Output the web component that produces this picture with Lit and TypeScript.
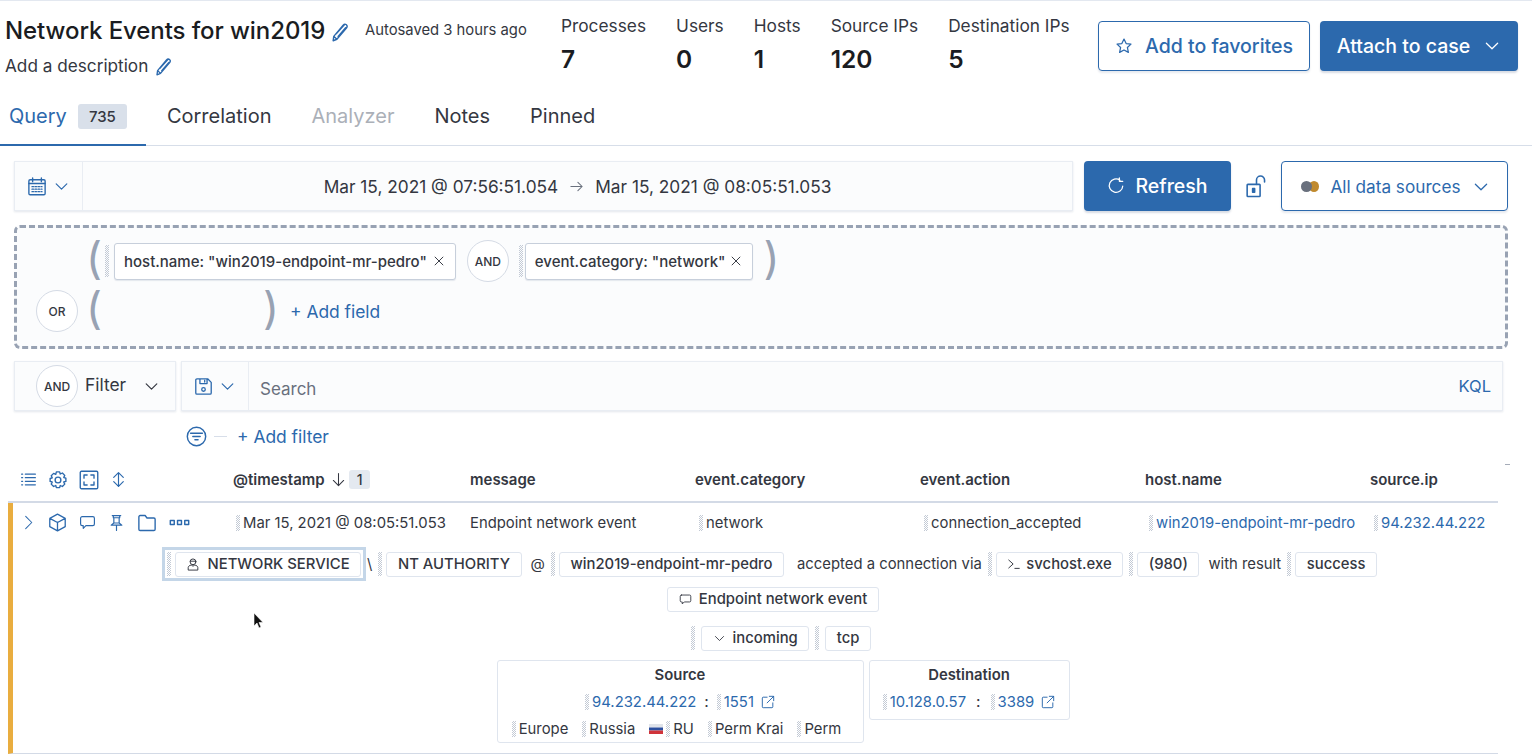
import { LitElement, html, css, svg } from 'lit';
import { customElement } from 'lit/decorators.js';

const icon = (size: number, body: unknown, cls = '') => html`<svg class="ic ${cls}" width=${size} height=${size} viewBox="0 0 16 16" fill="none" stroke="currentColor" stroke-width="1.1" stroke-linecap="round" stroke-linejoin="round">${body}</svg>`;

const chevron = svg`<path d="M3 5.500l5 5 5-5"/>`;
const pencil = svg`<path d="M3 11.500L10.500 2.500c.8-.9 1.800-1 2.600-.3s.8 1.700.1 2.600L5.500 13.800 2.500 15zM3.200 11.600l2.300 2.200M5 9.500l6.500-7.200M6.500 11.500l6-7"/>`;
const star = svg`<path d="M8 1.800l1.900 4 4.300.5-3.200 3 .9 4.400L8 11.500l-3.900 2.200.9-4.400-3.200-3 4.300-.5z"/>`;
const calendar = svg`<rect x="1.500" y="3" width="13" height="12" rx="1"/><path d="M1.500 6h13M4.500 1.500v3M11.500 1.500v3"/><path d="M4 8.500h8M4 10.500h8M4 12.500h8" stroke-dasharray="1.200 1.200"/>`;
const refresh = svg`<path d="M11.500 2.800A6 6 0 1 0 14 8M11 .8v3h3"/>`;
const lock = svg`<rect x="1.500" y="6.500" width="9" height="8.500" rx=".5"/><path d="M8 6.500V3.500a2.800 2.800 0 0 1 5.600 0v1.300"/><rect x="5.300" y="9.500" width="1.400" height="2.500" fill="currentColor"/>`;
const close = svg`<path d="M3.500 3.500l9 9M12.500 3.500l-9 9"/>`;
const save = svg`<path d="M2.500 1.500h9l3 3v9a1 1 0 0 1-1 1h-11a1 1 0 0 1-1-1v-11a1 1 0 0 1 1-1zM5 1.500v4h6v-4M9 2.800v1.400"/><circle cx="8" cy="10.500" r="1.500"/>`;
const filter = svg`<circle cx="8" cy="8" r="7"/><path d="M3.500 5.500h9M5.200 8h5.600M6.800 10.500h2.400"/>`;
const list = svg`<path d="M5 3h9.500M5 6.300h9.500M5 9.700h9.500M5 13h9.500M1.500 3h1M1.500 6.300h1M1.500 9.700h1M1.500 13h1"/>`;
const gear = svg`<circle cx="8" cy="8" r="2.300"/><path d="M6.700 1.500h2.600l.5 1.700 1.700-.8 1.900 1.900-.8 1.700 1.700.5v2.600l-1.700.5.8 1.700-1.900 1.900-1.700-.8-.5 1.700H6.700l-.5-1.700-1.700.8-1.900-1.900.8-1.700-1.700-.5V6.800l1.700-.5-.8-1.700 1.900-1.900 1.700.8z"/>`;
const full = svg`<rect x="1" y="1" width="14" height="14" rx="1"/><path d="M4 6.500V4h2.500M9.500 4H12v2.500M12 9.500V12H9.500M6.500 12H4V9.500"/>`;
const updown = svg`<path d="M8 1.500v13M3.500 6L8 1.500 12.500 6M3.500 10L8 14.500 12.500 10"/>`;
const arrowDown = svg`<path d="M8 1.500v13M2.500 9L8 14.500 13.500 9"/>`;
const arrowRight = svg`<path d="M2 8h12M9.500 3.500L14 8l-4.500 4.500"/>`;
const expand = svg`<path d="M5 1.500L11.500 8 5 14.500"/>`;
const cube = svg`<path d="M8 1l6.500 3.500v7L8 15l-6.500-3.500v-7zM1.500 4.500L8 8l6.500-3.500M8 8v7"/>`;
const comment = svg`<path d="M3 2.500h10a1.500 1.500 0 0 1 1.500 1.500v5.500A1.500 1.500 0 0 1 13 11H6.500L4 13.500V11H3A1.500 1.500 0 0 1 1.500 9.500V4A1.500 1.500 0 0 1 3 2.500z"/>`;
const pin = svg`<path d="M4 1.500h8M5 1.500v2h6v-2M5.500 3.500v5h5v-5M3 10.500L5.500 8.500h5l2.500 2zM8 10.500V15.500"/>`;
const folder = svg`<path d="M1.500 3a1 1 0 0 1 1-1h4l1.500 2h5.500a1 1 0 0 1 1 1v8a1 1 0 0 1-1 1h-11a1 1 0 0 1-1-1z"/>`;
const more = svg`<rect x="1" y="6.500" width="3" height="3"/><rect x="6.500" y="6.500" width="3" height="3"/><rect x="12" y="6.500" width="3" height="3"/>`;
const user = svg`<circle cx="8" cy="5.500" r="3.300"/><path d="M4.800 4.800h6.400M2.500 14.500v-2.500c0-1.300 1.500-2.500 3.500-2.800L8 10.500l2-1.300c2 .3 3.500 1.500 3.500 2.800v2.500z"/>`;
const terminal = svg`<path d="M2 3.500L7 8l-5 4.500M9 13h5"/>`;
const external = svg`<path d="M7 2.500H2.500a1 1 0 0 0-1 1v10a1 1 0 0 0 1 1h10a1 1 0 0 0 1-1V9M9.500 1.500h5v5M14.500 1.500L7 9"/>`;

@customElement('app-root')
export class AppRoot extends LitElement {
  static styles = css`
    :host {
      display: block;
      position: relative;
      height: 756px;
      overflow: hidden;
      background: #fff;
      color: #343741;
      font-family: Inter, 'Liberation Sans', sans-serif;
      font-size: 17.300px;
      border-top: 1px solid #e3e8f0;
      box-sizing: border-box;
    }
    .ic { flex: none; display: block; }
    .blue { color: #2c69ad; }

    .head { display: flex; height: 94px; box-sizing: border-box; padding-left: 5px; }
    .title-box { width: 360px; padding-top: 13px; flex: none; }
    .title { display: flex; align-items: center; gap: 5px; font-size: 24px; line-height: 34px; color: #1a1c21; font-weight: 500; letter-spacing: -0.08px; white-space: nowrap; }
    .title .ic { margin-top: 1px; }
    .desc { display: flex; align-items: center; gap: 6px; margin-top: 5px; line-height: 26px; font-size: 17.200px; }
    .saved { flex: none; width: 196px; padding-top: 19px; line-height: 20px; font-size: 14.800px; white-space: nowrap; }
    .stats { display: flex; gap: 30px; padding-top: 14px; flex: none; width: 537px; box-sizing: border-box; }
    .stat-l { line-height: 22px; font-size: 17.300px; white-space: nowrap; }
    .stat-v { margin-top: 7px; line-height: 30px; font-size: 24.500px; font-weight: 600; color: #1a1c21; }
    .btns { display: flex; gap: 10px; padding-top: 20px; }
    .btn { display: flex; align-items: center; justify-content: center; height: 50px; box-sizing: border-box; border-radius: 4px; font-size: 19.500px; font-weight: 500; white-space: nowrap; }
    .btn.outline { border: 1px solid #2c69ad; color: #2c69ad; background: #fff; box-shadow: 0 2px 2px rgba(60, 80, 120, 0.12); }
    .btn.solid { background: #2c69ad; color: #fff; box-shadow: 0 2px 2px rgba(60, 80, 120, 0.2); }
    .fav { width: 212px; gap: 12px; }
    .attach { width: 198px; gap: 13px; }

    .tabs { display: flex; height: 51px; border-bottom: 1px solid #d7dee9; box-sizing: border-box; font-size: 20px; }
    .tab { display: flex; align-items: center; gap: 11px; padding: 0 0 8px; white-space: nowrap; }
    .tab.on { color: #2c69ad; padding: 0 19px 8px 9px; border-bottom: 2px solid #2c69ad; height: 51px; box-sizing: border-box; margin-right: 21px; }
    .tab + .tab { margin-right: 40px; }
    .tab.off { color: #abb0b8; }
    .badge { display: block; width: 49px; line-height: 25px; text-align: center; background: #d9e0ea; border-radius: 3px; font-size: 15px; color: #343741; font-weight: 500; margin-top: 2px; }

    .date-row { display: flex; align-items: stretch; height: 50px; margin: 15px 24px 0 14px; }
    .panel { background: #fbfcfd; border: 1px solid #e9edf3; box-shadow: 0 1px 2px rgba(60, 80, 120, 0.14); box-sizing: border-box; }
    .date { flex: none; width: 1059px; display: flex; }
    .date-pick { width: 68px; flex: none; display: flex; align-items: center; gap: 6px; padding-left: 12px; box-sizing: border-box; border-right: 1px solid #e9edf3; color: #2c69ad; }
    .date-val { flex: 1; display: flex; align-items: center; justify-content: center; gap: 11px; white-space: nowrap; }
    .date-val .ic { color: #69707d; }
    .refresh { width: 147px; margin-left: 11px; gap: 10px; }
    .lock { width: 50px; display: flex; align-items: center; justify-content: center; color: #2c69ad; flex: none; }
    .sources { width: 227px; flex: none; gap: 11px; font-size: 17.200px; font-weight: 400; padding: 1px 0 0 2px; }
    .dots { display: flex; width: 18px; }
    .dots i { display: block; width: 11px; height: 11px; border-radius: 50%; background: #69707d; position: relative; z-index: 1; flex: none; }
    .dots i + i { background: #c08a2e; margin-left: -3px; z-index: 0; width: 10px; }

    .drop { height: 124px; margin: 14px 24px 0 14px; box-sizing: border-box; border: 3px dashed #98a2b3; border-radius: 6px; background: #fbfcfd; padding: 0 0 0 19px; font-size: 15px; }
    .drop-line { display: flex; align-items: center; height: 50px; }
    .drop-line.first { margin-top: 8px; padding-left: 50px; }
    .paren { font-size: 44px; line-height: 44px; color: #98a2b3; font-weight: 400; width: 12px; flex: none; margin-top: -6px; }
    .circle { width: 42px; height: 42px; border-radius: 50%; border: 1px solid #d5dbe5; background: #fff; display: flex; align-items: center; justify-content: center; font-size: 12px; font-weight: 500; color: #343741; box-sizing: border-box; flex: none; }
    .grip { display: block; width: 4px; height: 24px; flex: none; background: repeating-conic-gradient(#c3cad5 0 25%, transparent 0 50%) 0 0 / 2px 2px; }
    .grip.tall { height: 32px; }
    .grip.short { height: 16px; }
    .pill { display: flex; align-items: center; gap: 5px; height: 37px; box-sizing: border-box; padding: 0 9px; background: #fff; border: 1px solid #c7cfdb; border-radius: 3px; white-space: nowrap; font-weight: 500; box-shadow: 0 1px 1px rgba(60, 80, 120, 0.12); }
    .add { color: #2c69ad; white-space: nowrap; font-size: 17.400px; }

    .filter-row { display: flex; height: 50px; margin: 12px 29px 0 14px; gap: 5px; }
    .fbox { width: 162px; flex: none; display: flex; align-items: center; padding-left: 21px; gap: 7px; font-size: 17.400px; }
    .fbox .ic { margin-left: 10px; }
    .ftxt { margin-top: -3px; }
    .search { flex: 1; display: flex; align-items: center; }
    .save { width: 67px; flex: none; height: 100%; display: flex; align-items: center; gap: 6px; padding-left: 12px; box-sizing: border-box; border-right: 1px solid #e9edf3; color: #2c69ad; }
    .search-t { flex: 1; padding-left: 11px; color: #69707d; font-size: 17px; padding-top: 5px; }
    .kql { color: #2c69ad; padding-right: 11px; font-size: 16.500px; }

    .add-filter { display: flex; align-items: center; height: 34px; margin: 8px 0 0 186px; color: #2c69ad; gap: 10px; font-size: 17.400px; }
    .add-filter i { display: block; width: 13px; height: 1px; background: #d7dee9; margin-left: -3px; }

    .table { margin: 3px 34px 0 8px; font-size: 14.850px; }
    .grid { display: grid; grid-template-columns: 225px 237px repeat(5, 225px); }
    .thead { height: 47px; padding-top: 2px; align-items: center; border-bottom: 2px solid #d3dae6; box-sizing: border-box; font-weight: 600; color: #343741; white-space: nowrap; font-size: 15px; }
    .tools { display: flex; align-items: center; gap: 11px; color: #2c69ad; padding-left: 12px; }
    .th { display: flex; align-items: center; gap: 6px; }
    .count { background: #e4e9f0; border-radius: 3px; padding: 0 8px; line-height: 19px; font-size: 14px; font-weight: 500; margin-left: -3px; }
    .row { border-left: 5px solid #e9ad3f; height: 251px; box-sizing: border-box; border-bottom: 1px solid #d3dae6; }
    .row-top { display: grid; grid-template-columns: 220px 237px repeat(5, 225px); height: 44px; align-items: center; padding-bottom: 5px; box-sizing: border-box; white-space: nowrap; }
    .row-tools { display: flex; align-items: center; gap: 12px; color: #2c69ad; padding-left: 8px; }
    .cell { display: flex; align-items: center; gap: 3px; padding-left: 4px; }
    .cell.lead { padding-left: 3px; }
    .lnk { color: #2c69ad; }
    .line { display: flex; justify-content: center; align-items: center; gap: 6px; white-space: nowrap; }
    .line.l1 { height: 34px; padding-left: 28px; }
    .line.l2 { height: 24px; margin-top: 6px; padding-left: 35px; }
    .line.l3 { height: 24px; margin-top: 15px; padding-left: 51px; }
    .tag { display: flex; align-items: center; gap: 7px; height: 25px; box-sizing: border-box; padding: 0 10.500px; background: #fff; border: 1px solid #dfe5ee; border-radius: 3px; font-weight: 500; }
    .tag.tight { gap: 5px; }
    .sel { display: flex; align-items: center; gap: 4px; padding: 2px; height: 34px; box-sizing: border-box; border: 3px solid #c4d6e8; }
    .g { margin-right: -2px; }
    .boxes { display: flex; justify-content: center; gap: 5px; margin-top: 10px; padding-left: 55px; align-items: flex-start; }
    .box { border: 1px solid #dfe5ee; border-radius: 3px; box-sizing: border-box; background: #fff; }
    .box h4 { margin: 0; text-align: center; font-size: 14.850px; line-height: 20px; padding-top: 4px; font-weight: 600; color: #343741; }
    .src { width: 367px; height: 83px; }
    .dst { width: 201px; height: 60px; }
    .ips { display: flex; justify-content: center; align-items: center; gap: 3px; height: 28px; margin-top: 3px; }
    .ips b { font-weight: 500; margin: 0 5px; color: #343741; }
    .dst .ips b { margin: 0 7px; }
    .ips .ic { margin-left: 4px; }
    .geo { display: flex; justify-content: center; align-items: center; gap: 3px; height: 28px; margin-top: -1px; padding-right: 7px; }
    .geo span { margin-right: 11px; }
    .geo span:last-child { margin-right: 0; }
    .cursor { position: absolute; left: 253px; top: 611px; }
    .tick { position: absolute; left: 1505px; top: 463px; width: 5px; height: 1px; background: #a5acb8; }
  `;

  private grip(size = '') {
    return html`<i class="grip ${size}"></i>`;
  }

  render() {
    return html`
      <div class="head">
        <div class="title-box">
          <div class="title">Network Events for win2019 <span class="blue">${icon(20, pencil)}</span></div>
          <div class="desc">Add a description <span class="blue">${icon(19, pencil)}</span></div>
        </div>
        <div class="saved">Autosaved 3 hours ago</div>
        <div class="stats">
          ${[['Processes', '7'], ['Users', '0'], ['Hosts', '1'], ['Source IPs', '120'], ['Destination IPs', '5']].map(
            ([l, v]) => html`<div><div class="stat-l">${l}</div><div class="stat-v">${v}</div></div>`
          )}
        </div>
        <div class="btns">
          <div class="btn outline fav">${icon(18, star)} Add to favorites</div>
          <div class="btn solid attach">Attach to case ${icon(18, chevron)}</div>
        </div>
      </div>

      <div class="tabs">
        <div class="tab on">Query <span class="badge">735</span></div>
        <div class="tab">Correlation</div>
        <div class="tab off">Analyzer</div>
        <div class="tab">Notes</div>
        <div class="tab">Pinned</div>
      </div>

      <div class="date-row">
        <div class="panel date">
          <div class="date-pick">${icon(20, calendar)} ${icon(17, chevron)}</div>
          <div class="date-val">Mar 15, 2021 @ 07:56:51.054 ${icon(15, arrowRight)} Mar 15, 2021 @ 08:05:51.053</div>
        </div>
        <div class="btn solid refresh">${icon(18, refresh)} Refresh</div>
        <div class="lock">${icon(23, lock)}</div>
        <div class="btn outline sources"><span class="dots"><i></i><i></i></span> All data sources ${icon(18, chevron)}</div>
      </div>

      <div class="drop">
        <div class="drop-line first">
          <span class="paren">(</span>
          <span style="margin-left:7px">${this.grip('tall')}</span>
          <div class="pill" style="margin-left:5px">host.name: "win2019-endpoint-mr-pedro" ${icon(14, close)}</div>
          <span class="circle" style="margin:0 10px 0 11px">AND</span>
          ${this.grip('tall')}
          <div class="pill" style="margin-left:2px;gap:3px">event.category: "network" ${icon(14, close)}</div>
          <span class="paren" style="margin-left:11px">)</span>
        </div>
        <div class="drop-line">
          <span class="circle">OR</span>
          <span class="paren" style="margin-left:8px">(</span>
          <span class="paren" style="margin-left:165px">)</span>
          <span class="add" style="margin-left:15px">+ Add field</span>
        </div>
      </div>

      <div class="filter-row">
        <div class="panel fbox"><span class="circle">AND</span> <span class="ftxt">Filter</span> ${icon(17, chevron)}</div>
        <div class="panel search">
          <div class="save">${icon(19, save)} ${icon(17, chevron)}</div>
          <div class="search-t">Search</div>
          <div class="kql">KQL</div>
        </div>
      </div>

      <div class="add-filter">${icon(21, filter)}<i></i><span>+ Add filter</span></div>

      <div class="table">
        <div class="grid thead">
          <div class="tools">${icon(17, list)} ${icon(20, gear)} ${icon(20, full)} ${icon(17, updown)}</div>
          <div class="th">@timestamp ${icon(15, arrowDown)} <span class="count">1</span></div>
          <div class="th">message</div>
          <div class="th">event.category</div>
          <div class="th">event.action</div>
          <div class="th">host.name</div>
          <div class="th">source.ip</div>
        </div>
        <div class="row">
          <div class="row-top">
            <div class="row-tools">${icon(15, expand)} ${icon(19, cube)} ${icon(17, comment)} ${icon(17, pin)} ${icon(20, folder)} ${icon(21, more)}</div>
            <div class="cell lead">${this.grip('short')} Mar 15, 2021 @ 08:05:51.053</div>
            <div class="cell" style="padding-left:0">Endpoint network event</div>
            <div class="cell">${this.grip('short')} network</div>
            <div class="cell">${this.grip('short')} connection_accepted</div>
            <div class="cell lnk">${this.grip('short')} win2019-endpoint-mr-pedro</div>
            <div class="cell lnk">${this.grip('short')} 94.232.44.222</div>
          </div>
          <div class="line l1">
            <div class="sel">${this.grip()}<span class="tag">${icon(14, user)} NETWORK SERVICE</span></div>
            <span style="margin-left:-5px">\\</span>
            <span class="g">${this.grip()}</span><span class="tag">NT AUTHORITY</span>
            <span style="margin-left:3px">@</span>
            <span class="g">${this.grip()}</span><span class="tag">win2019-endpoint-mr-pedro</span>
            <span style="margin-left:7px">accepted a connection via</span>
            <span class="g">${this.grip()}</span><span class="tag tight">${icon(14, terminal)} svchost.exe</span>
            <span class="g">${this.grip()}</span><span class="tag">(980)</span>
            <span style="margin-left:3px">with result</span>
            <span class="g">${this.grip()}</span><span class="tag">success</span>
          </div>
          <div class="line l2"><span class="tag">${icon(13, comment)} Endpoint network event</span></div>
          <div class="line l3">
            ${this.grip()}<span class="tag">${icon(13, chevron)} incoming</span>
            ${this.grip()}<span class="tag">tcp</span>
          </div>
          <div class="boxes">
            <div class="box src">
              <h4>Source</h4>
              <div class="ips lnk">${this.grip('short')} 94.232.44.222 <b>:</b> ${this.grip('short')} 1551 ${icon(14, external)}</div>
              <div class="geo">
                ${this.grip('short')}<span>Europe</span>
                ${this.grip('short')}<span>Russia</span>
                <svg width="14" height="10" viewBox="0 0 14 10"><rect width="14" height="3.500" fill="#dfe3ea"/><rect y="3.500" width="14" height="3" fill="#2c4f9e"/><rect y="6.500" width="14" height="3.500" fill="#d0343a"/></svg>
                ${this.grip('short')}<span>RU</span>
                ${this.grip('short')}<span>Perm Krai</span>
                ${this.grip('short')}<span>Perm</span>
              </div>
            </div>
            <div class="box dst">
              <h4>Destination</h4>
              <div class="ips lnk">${this.grip('short')} 10.128.0.57 <b>:</b> ${this.grip('short')} 3389 ${icon(14, external)}</div>
            </div>
          </div>
        </div>
      </div>

      <i class="tick"></i>
      <svg class="cursor" width="12" height="18" viewBox="0 0 12 18"><path d="M1 1v13l3-3 2 5 2-1-2-4.500h4z" fill="#111" stroke="#fff" stroke-width=".6"/></svg>
    `;
  }
}
